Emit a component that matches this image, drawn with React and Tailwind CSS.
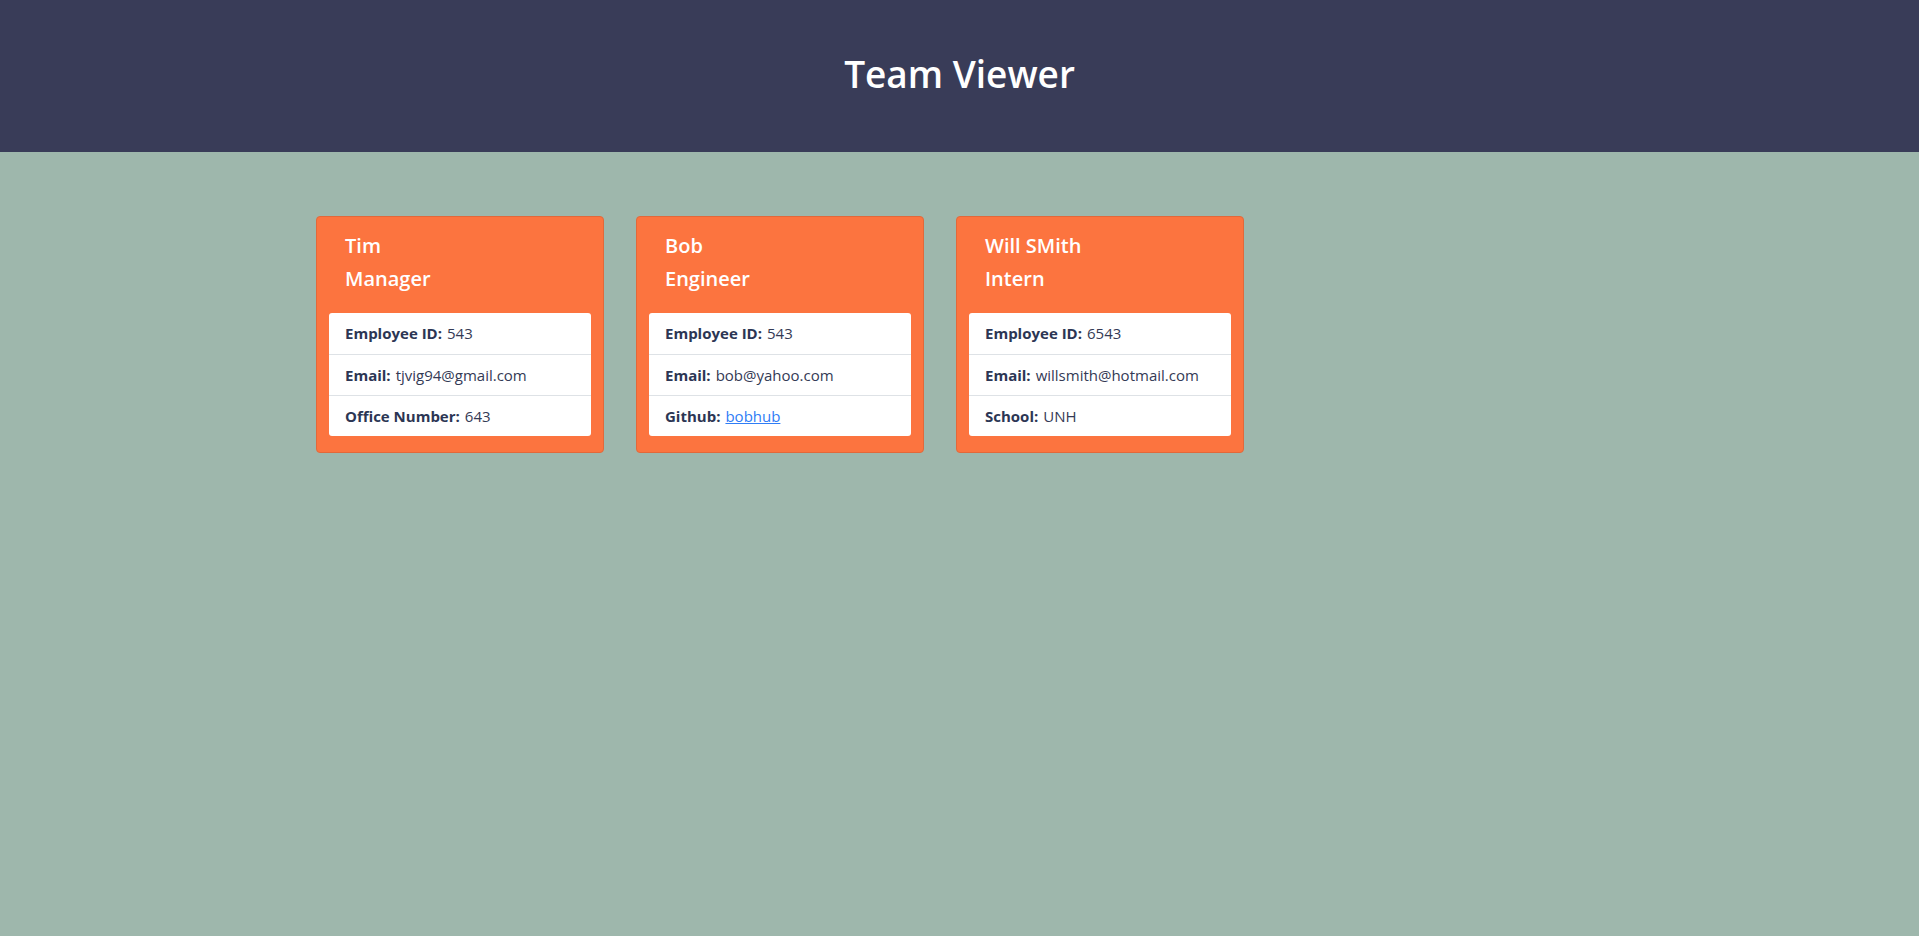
import React from "react";

const team = [
  {
    name: "Tim",
    role: "Manager",
    rows: [
      ["Employee ID:", "543"],
      ["Email:", "tjvig94@gmail.com"],
      ["Office Number:", "643"],
    ],
  },
  {
    name: "Bob",
    role: "Engineer",
    rows: [
      ["Employee ID:", "543"],
      ["Email:", "bob@yahoo.com"],
      ["Github:", "bobhub", true],
    ],
  },
  {
    name: "Will SMith",
    role: "Intern",
    rows: [
      ["Employee ID:", "6543"],
      ["Email:", "willsmith@hotmail.com"],
      ["School:", "UNH"],
    ],
  },
];

function Card({ member }) {
  return (
    <div className="w-[288px] rounded-[4px] border border-[#e2683a] bg-[#fc743f] pb-4">
      <div className="px-[28px] pt-[16px] pb-[14px] text-white">
        <h5 className="mb-2 text-[20px] font-semibold leading-[25px]">{member.name}</h5>
        <h5 className="mb-2 text-[20px] font-semibold leading-[25px]">{member.role}</h5>
      </div>
      <ul className="mx-3 rounded-[3px] bg-white">
        {member.rows.map(([label, value, link], i) => (
          <li
            key={i}
            className={`flex h-[41px] items-center px-4 text-[15px] text-[#343a55] ${
              i > 0 ? "border-t border-[#dee2e6]" : ""
            }`}
          >
            <span className="font-bold text-[#2c3654]">{label}</span>
            <span className="ml-[5px]">
              {link ? (
                <a href="#" className="text-[#2f7df6] underline">{value}</a>
              ) : (
                value
              )}
            </span>
          </li>
        ))}
      </ul>
    </div>
  );
}

export default function App() {
  return (
    <div
      className="min-h-[936px] bg-[#9eb7ac]"
      style={{ fontFamily: '"Open Sans", "Noto Sans", sans-serif' }}
    >
      <header className="flex h-[152px] items-center justify-center bg-[#393c58] pb-1">
        <h1 className="text-[37px] font-semibold text-white">Team Viewer</h1>
      </header>
      <main className="mx-auto flex w-[1287px] gap-8 pt-16">
        {team.map((m) => (
          <Card key={m.name} member={m} />
        ))}
      </main>
    </div>
  );
}
